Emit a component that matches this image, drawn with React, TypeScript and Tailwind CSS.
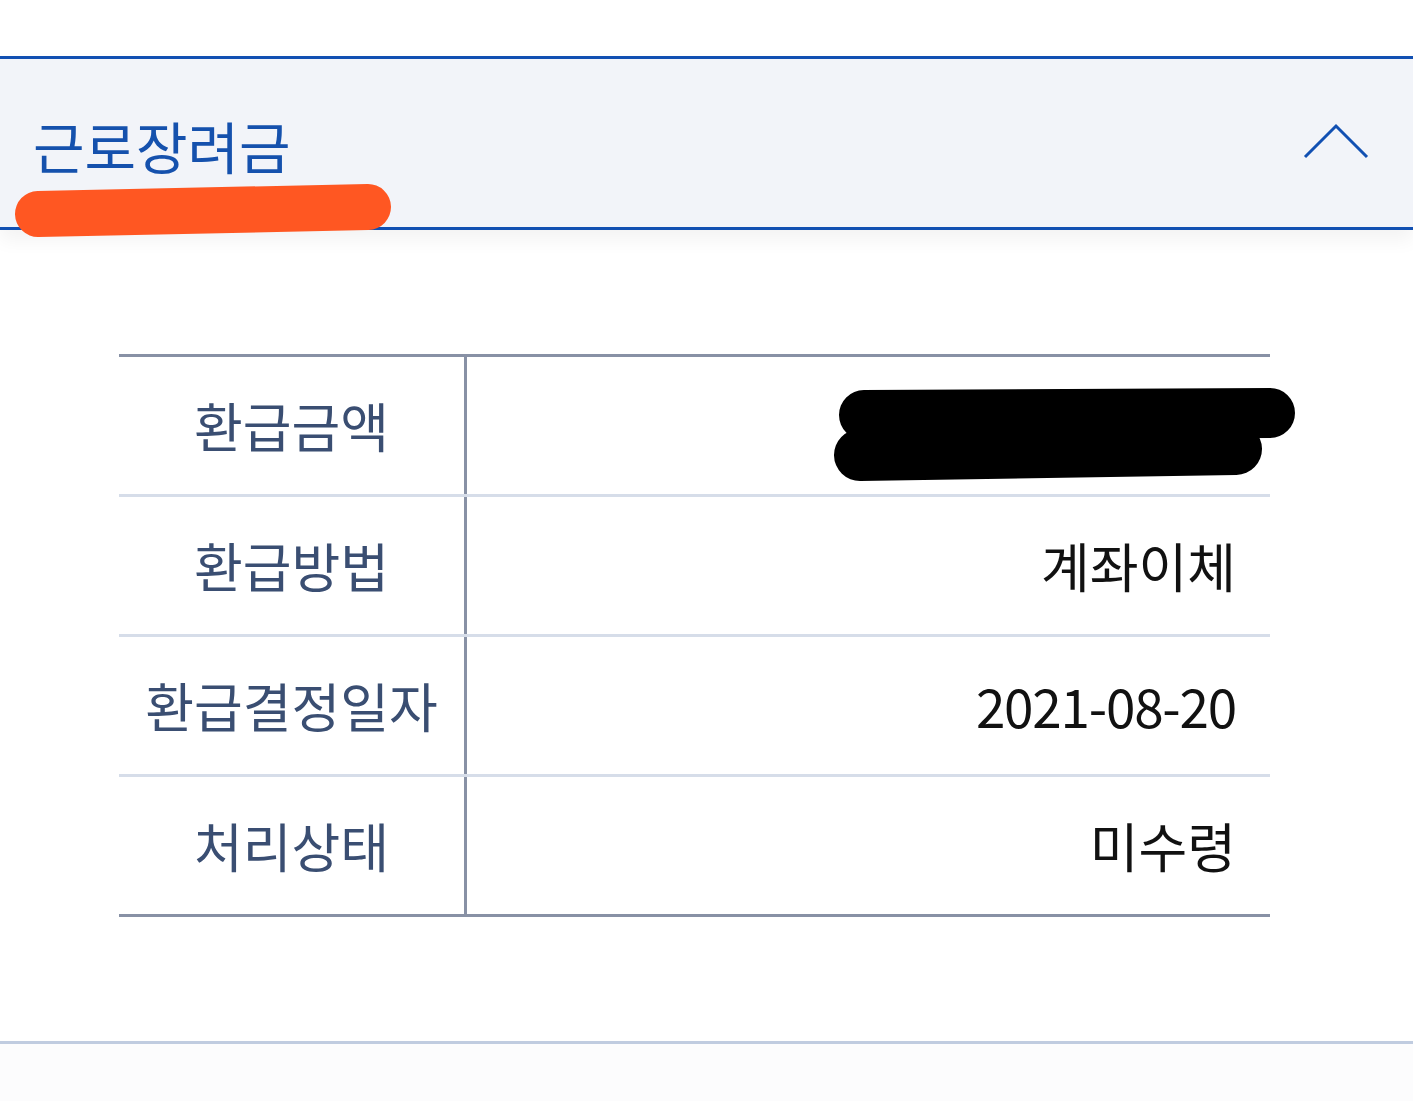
import React from "react";

const rows = [
  { label: "환급금액", value: "", tight: false },
  { label: "환급방법", value: "계좌이체", tight: false },
  { label: "환급결정일자", value: "2021-08-20", tight: true },
  { label: "처리상태", value: "미수령", tight: false },
];

const App: React.FC = () => {
  return (
    <div
      className="relative min-h-[1103px] bg-white"
      style={{ fontFamily: '"Noto Sans CJK KR", "Noto Sans", sans-serif' }}
    >
      <div className="h-[56px] bg-white" />
      <header className="relative z-10 flex h-[174px] items-center justify-between border-y-[3px] border-[#1150b2] bg-[#f2f4f9] pl-[33px] pr-[44px] shadow-[0_10px_18px_rgba(0,0,0,0.05)]">
        <h1 className="mt-[4px] text-[56px] leading-none text-[#1551ad]">근로장려금</h1>
        <svg width="66" height="36" viewBox="0 0 66 36" className="mb-[4px]">
          <path d="M2 34 L33 3 L64 34" fill="none" stroke="#1150b2" strokeWidth="3" />
        </svg>
      </header>

      <section className="pt-[124px] pb-[124px] pl-[119px] pr-[143px]">
        <div className="border-t-[3px] border-[#8891a5]">
          {rows.map((row, i) => (
            <div
              key={row.label}
              className={
                "flex h-[140px] border-b-[3px] " +
                (i === rows.length - 1 ? "border-[#8891a5]" : "border-[#d6dde9]")
              }
            >
              <div className="flex w-[348px] items-center justify-center border-r-[3px] border-[#8891a5] text-[53px] text-[#3a4e72]">
                {row.label}
              </div>
              <div
                className={
                  "flex flex-1 items-center justify-end pr-[34px] text-[53px] text-[#111111] " +
                  (row.tight ? "tracking-[-1.2px]" : "")
                }
              >
                {row.value}
              </div>
            </div>
          ))}
        </div>
      </section>

      <div className="border-t-[3px] border-[#c0cce0] bg-[#fcfcfd] h-[60px]" />

      {/* marker scribbles over content */}
      <svg className="pointer-events-none absolute left-0 top-0 z-20" width="1413" height="500">
        <path d="M38 214 L368 207" stroke="#ff5722" strokeWidth="46" strokeLinecap="round" fill="none" />
        <path d="M864 415 L1270 413" stroke="#000" strokeWidth="50" strokeLinecap="round" fill="none" />
        <path d="M860 455 L1236 449" stroke="#000" strokeWidth="52" strokeLinecap="round" fill="none" />
        <path d="M860 425 L1250 425 L1250 445 L860 445 Z" fill="#000" />
      </svg>
    </div>
  );
};

export default App;
